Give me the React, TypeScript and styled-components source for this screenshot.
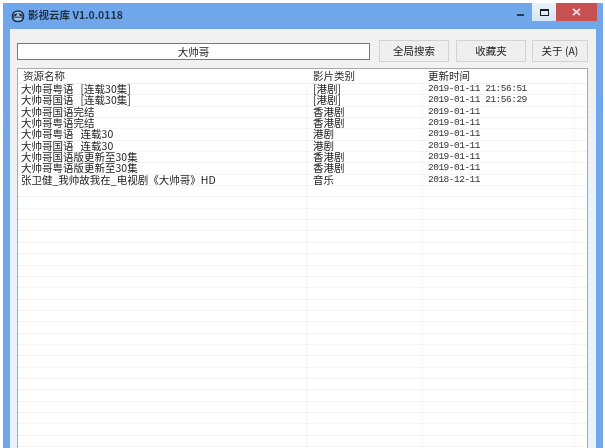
import { Fragment } from 'react'
import styled, { createGlobalStyle } from 'styled-components'

const GlobalStyle = createGlobalStyle`
  html, body {
    margin: 0;
    padding: 0;
    background: #fff;
  }
  body {
    width: 605px;
    height: 448px;
    overflow: hidden;
    font-family: "Noto Sans CJK SC", "Liberation Sans", sans-serif;
  }
`

const Page = styled.div`
  width: 605px;
  height: 448px;
  padding: 3px 2px 0 3px;
  box-sizing: border-box;
  overflow: hidden;
  filter: blur(0.35px);
`

const Window = styled.div`
  height: 445px;
  background: #6fa7ea;
  display: flex;
  flex-direction: column;
  padding: 0 7px;
  box-sizing: border-box;
`

const TitleBar = styled.div`
  height: 26px;
  flex: none;
  margin-right: -1px;
  display: flex;
  align-items: flex-start;
`

const AppIcon = styled.svg`
  width: 14px;
  height: 14px;
  margin: 6px 0 0 1px;
  flex: none;
`

const Title = styled.div`
  margin: 4px 0 0 3px;
  font-size: 10.5px;
  line-height: 16px;
  font-weight: 700;
  color: #1f3049;
  white-space: nowrap;
`

const Spacer = styled.div`
  flex: 1;
`

const MinButton = styled.div`
  width: 25px;
  height: 18px;
  display: flex;
  justify-content: center;
  padding: 11px 0 0 1px;
  box-sizing: border-box;

  &::before {
    content: '';
    width: 7px;
    height: 2px;
    background: #27384f;
  }
`

const MaxButton = styled.div`
  width: 24px;
  height: 18px;
  background: linear-gradient(#e8f2fb, #d6e6f6);
  display: flex;
  align-items: center;
  justify-content: center;

  &::before {
    content: '';
    width: 7px;
    height: 4px;
    border: 1px solid #1c1c1c;
    border-top-width: 2px;
  }
`

const CloseButton = styled.div`
  width: 41px;
  height: 18px;
  background: #c75050;
  display: flex;
  align-items: center;
  justify-content: center;
`

const Client = styled.div`
  flex: 1;
  min-height: 0;
  background: linear-gradient(#f1f1f1 0, #f1f1f1 60px, #e9f3fc 200px);
  padding: 11px 8px 0 7px;
  display: flex;
  flex-direction: column;
`

const Toolbar = styled.div`
  display: flex;
  align-items: center;
  height: 22px;
  flex: none;
`

const SearchInput = styled.div`
  width: 351px;
  height: 15px;
  background: #fff;
  border: 1px solid #777;
  font-size: 10.5px;
  line-height: 15px;
  color: #222;
  text-align: center;
`

const ToolButton = styled.div<{ $width: number; $gap: number }>`
  width: ${(p) => p.$width}px;
  margin-left: ${(p) => p.$gap}px;
  height: 22px;
  box-sizing: border-box;
  background: #efefef;
  border: 1px solid #d2d2d2;
  font-size: 10.5px;
  line-height: 20px;
  color: #222;
  text-align: center;
  white-space: pre;
`

const ListBox = styled.div`
  margin-top: 6px;
  flex: 1;
  min-height: 0;
  background: #fff;
  border: 1px solid #a9a9a9;
  border-bottom: none;
  overflow: hidden;
`

const HeaderRow = styled.div`
  display: grid;
  grid-template-columns: 289px 116px 152px 1fr;
  height: 14px;
  border-bottom: 1px solid #f1f1f1;
`

const HeaderCell = styled.div<{ $pad: number }>`
  padding-left: ${(p) => p.$pad}px;
  font-size: 10.5px;
  line-height: 13px;
  color: #2b2b2b;
  white-space: nowrap;
`

const Grid = styled.div`
  display: grid;
  grid-template-columns: 289px 116px 152px 1fr;
  grid-auto-rows: 11.35px;
`

const Cell = styled.div<{ $pad?: number; $last?: boolean }>`
  box-sizing: border-box;
  padding-left: ${(p) => p.$pad ?? 0}px;
  font-size: 10.5px;
  line-height: 10px;
  color: #1c1c1c;
  white-space: pre;
  border-bottom: 1px solid #f3f3f3;
  border-right: ${(p) => (p.$last ? 'none' : '1px solid #f5f5f5')};
`

const DateCell = styled(Cell)`
  font-family: "Liberation Mono", "DejaVu Sans Mono", monospace;
  font-size: 9.5px;
  letter-spacing: -0.5px;
  color: #333;
`

const rows = [
  ['大帅哥粤语   [连载30集]', '[港剧]', '2019-01-11 21:56:51'],
  ['大帅哥国语   [连载30集]', '[港剧]', '2019-01-11 21:56:29'],
  ['大帅哥国语完结', '香港剧', '2019-01-11'],
  ['大帅哥粤语完结', '香港剧', '2019-01-11'],
  ['大帅哥粤语   连载30', '港剧', '2019-01-11'],
  ['大帅哥国语   连载30', '港剧', '2019-01-11'],
  ['大帅哥国语版更新至30集', '香港剧', '2019-01-11'],
  ['大帅哥粤语版更新至30集', '香港剧', '2019-01-11'],
  ['张卫健_我帅故我在_电视剧《大帅哥》HD', '音乐', '2018-12-11'],
]

const EMPTY_ROWS = 30

export default function App() {
  return (
    <Page>
      <GlobalStyle />
      <Window>
        <TitleBar>
          <AppIcon viewBox="0 0 14 14">
            <path d="M1.5 7.5 C1.5 4 4 2 7 2 C10 2 12.5 4 12.5 7.5 C12.5 11 10.5 12.5 7 12.5 C3.5 12.5 1.5 11 1.5 7.5 Z" fill="#a9c8ee" stroke="#1f3049" strokeWidth="1.6" />
            <path d="M2 7.5 L5 7 L7 4 L9 7 L12 7.5 C11 3 3 3 2 7.5 Z" fill="#1f3049" />
            <path d="M2 8.2 H12" stroke="#1f3049" strokeWidth="1" />
          </AppIcon>
          <Title>影视云库 V1.0.0118</Title>
          <Spacer />
          <MinButton />
          <MaxButton />
          <CloseButton>
            <svg width="9" height="8" viewBox="0 0 9 8">
              <path d="M1 0.8 L8 7.2 M8 0.8 L1 7.2" stroke="#f7e6e6" strokeWidth="1.7" />
            </svg>
          </CloseButton>
        </TitleBar>
        <Client>
          <Toolbar>
            <SearchInput>大帅哥</SearchInput>
            <ToolButton $width={70} $gap={9}>全局搜索</ToolButton>
            <ToolButton $width={70} $gap={7}>收藏夹</ToolButton>
            <ToolButton $width={56} $gap={6}>关于 (A)</ToolButton>
          </Toolbar>
          <ListBox>
            <HeaderRow>
              <HeaderCell $pad={5}>资源名称</HeaderCell>
              <HeaderCell $pad={6}>影片类别</HeaderCell>
              <HeaderCell $pad={5}>更新时间</HeaderCell>
            </HeaderRow>
            <Grid>
              {rows.map((r) => (
                <Fragment key={r[0]}>
                  <Cell $pad={3}>{r[0]}</Cell>
                  <Cell $pad={6}>{r[1]}</Cell>
                  <DateCell $pad={5}>{r[2]}</DateCell>
                  <Cell $last />
                </Fragment>
              ))}
              {Array.from({ length: EMPTY_ROWS }, (_, i) => (
                <Fragment key={i}>
                  <Cell />
                  <Cell />
                  <Cell />
                  <Cell $last />
                </Fragment>
              ))}
            </Grid>
          </ListBox>
        </Client>
      </Window>
    </Page>
  )
}
